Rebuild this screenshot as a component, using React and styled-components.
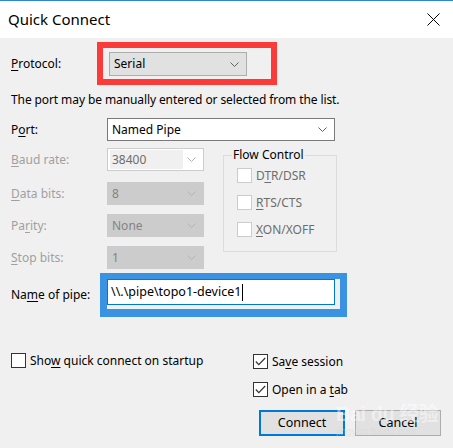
import React from 'react';
import styled, { createGlobalStyle } from 'styled-components';

const GlobalStyle = createGlobalStyle`
  html, body {
    margin: 0;
    padding: 0;
    background: #f0f0f0;
  }
  body {
    font-family: 'Noto Sans', 'Open Sans', sans-serif;
    font-size: 12px;
    line-height: 16px;
    color: #000;
  }
`;

const Window = styled.div`
  position: relative;
  width: 453px;
  height: 448px;
  display: flex;
  flex-direction: column;
  background: #f0f0f0;
  overflow: hidden;
`;

const TitleBar = styled.div`
  height: 37px;
  border-top: 1px solid #2b86d6;
  background: #fff;
  display: flex;
  align-items: center;
  justify-content: space-between;
  padding: 0 13px 0 8px;
  box-sizing: content-box;
`;

const Title = styled.span`
  font-size: 15px;
  color: #000;
  margin-top: -1px;
`;

const Body = styled.div`
  display: flex;
  flex-direction: column;
  padding: 0 11px;
`;

const Row = styled.div`
  display: flex;
  align-items: center;
  margin-top: ${p => p.$top || 0}px;
`;

const Hint = styled.div`
  margin-top: 7px;
  letter-spacing: -0.1px;
`;

const Label = styled.span`
  width: ${p => p.$width || 96}px;
  flex-shrink: 0;
  color: ${p => (p.$disabled ? '#a0a0a0' : '#000')};
`;

const Key = styled.span`
  text-decoration: underline;
  text-underline-offset: 2px;
`;

const Highlight = styled.div`
  border-style: solid;
  border-color: ${p => p.$color};
  border-width: ${p => p.$border};
  padding: ${p => p.$pad};
  display: flex;
  box-sizing: border-box;
`;

const Combo = styled.div`
  width: ${p => p.$width}px;
  height: ${p => p.$height || 23}px;
  box-sizing: border-box;
  display: flex;
  align-items: center;
  justify-content: space-between;
  padding: 0 7px 0 4px;
  border: 1px solid ${p => p.$border};
  background: ${p => p.$bg};
  color: ${p => p.$color || '#000'};
`;

const EditArea = styled.span`
  width: 71px;
  height: 19px;
  margin-left: -2px;
  padding-left: 2px;
  display: flex;
  align-items: center;
  background: #f0f0f0;
  color: #6d6d6d;
`;

const Lower = styled.div`
  display: flex;
  align-items: flex-start;
`;

const Fields = styled.div`
  display: flex;
  flex-direction: column;
`;

const GroupBox = styled.div`
  width: 114px;
  height: 97px;
  box-sizing: border-box;
  margin: 14px 0 0 19px;
  padding: 0 0 0 13px;
  border: 1px solid #dcdcdc;
  display: flex;
  flex-direction: column;
  align-items: flex-start;
  gap: 12px;
`;

const GroupTitle = styled.span`
  margin: -9px 0 -7px -5px;
  padding: 0 1px;
  background: #f0f0f0;
  color: #000;
`;

const Check = styled.label`
  height: 15px;
  display: flex;
  align-items: center;
  gap: 4px;
  color: ${p => (p.$disabled ? '#6d6d6d' : '#000')};
`;

const Box = styled.span`
  width: 15px;
  height: 15px;
  box-sizing: border-box;
  border: 1px solid ${p => (p.$disabled ? '#cccccc' : '#333')};
  background: #fff;
  display: flex;
  align-items: center;
  justify-content: center;
`;

const PipeInput = styled.div`
  width: 228px;
  height: 26px;
  box-sizing: border-box;
  border: 1px solid #0078d7;
  background: #fff;
  display: flex;
  align-items: center;
  padding-left: 3px;
  font-size: 12.5px;
`;

const Caret = styled.span`
  width: 1px;
  height: 17px;
  background: #000;
  margin-left: 1px;
`;

const Bottom = styled.div`
  display: flex;
  align-items: flex-start;
  margin-top: 36px;
`;

const LeftOptions = styled.div`
  width: 242px;
`;

const RightOptions = styled.div`
  display: flex;
  flex-direction: column;
  gap: 13px;
  margin-top: 1px;
`;

const Buttons = styled.div`
  display: flex;
  gap: 10px;
  margin-left: 6px;
`;

const Button = styled.button`
  width: 86px;
  height: 26px;
  box-sizing: border-box;
  font: inherit;
  font-size: 12.5px;
  color: #000;
  background: #e1e1e1;
  border: ${p => (p.$primary ? '2px solid #0078d7' : '1px solid #adadad')};
  padding: 0;
`;

const Watermark = styled.div`
  position: absolute;
  left: 336px;
  top: 404px;
  color: rgba(255, 255, 255, 0.45);
  font-family: 'Liberation Sans', 'Noto Sans CJK SC', sans-serif;
  pointer-events: none;
  line-height: 1;
`;

const MarkTitle = styled.div`
  font-size: 20px;
  font-weight: 700;
  letter-spacing: -0.5px;
`;

const MarkUrl = styled.div`
  font-size: 10px;
  margin-top: 3px;
  color: rgba(215, 215, 215, 0.5);
`;

const Chevron = ({ color = '#606060' }) => (
  <svg width="9" height="5" viewBox="0 0 9 5">
    <polyline points="0.5,0.5 4.5,4.5 8.5,0.5" fill="none" stroke={color} strokeWidth="1" />
  </svg>
);

const Tick = () => (
  <svg width="11" height="9" viewBox="0 0 11 9">
    <polyline points="0.8,4.5 3.8,7.6 10.2,1" fill="none" stroke="#333" strokeWidth="1.2" />
  </svg>
);

const Close = () => (
  <svg width="13" height="13" viewBox="0 0 13 13">
    <path d="M0.5 0.5 L12.5 12.5 M12.5 0.5 L0.5 12.5" stroke="#000" strokeWidth="1" />
  </svg>
);

const DisabledCombo = ({ value }) => (
  <Combo $width={97} $border="#cccccc" $bg="#cccccc" $color="#838383">
    <span>{value}</span>
    <Chevron color="#b4b4b4" />
  </Combo>
);

const CheckItem = ({ checked, disabled, children }) => (
  <Check $disabled={disabled}>
    <Box $disabled={disabled}>{checked && <Tick />}</Box>
    <span>{children}</span>
  </Check>
);

export default function App() {
  return (
    <>
      <GlobalStyle />
      <Window>
        <TitleBar>
          <Title>Quick Connect</Title>
          <Close />
        </TitleBar>
        <Body>
          <Row $top={4}>
            <Label $width={86}>
              <Key>P</Key>rotocol:
            </Label>
            <Highlight $color="#fb3a3a" $border="6px" $pad="4px 24px 3px 6px">
              <Combo $width={138} $height={24} $border="#adadad" $bg="#e1e1e1">
                <span>Serial</span>
                <Chevron />
              </Combo>
            </Highlight>
          </Row>
          <Hint>The port may be manually entered or selected from the list.</Hint>
          <Row $top={10}>
            <Label>
              P<Key>o</Key>rt:
            </Label>
            <Combo $width={228} $border="#7a7a7a" $bg="#fff">
              <span>Named Pipe</span>
              <Chevron />
            </Combo>
          </Row>
          <Lower>
            <Fields>
              <Row $top={7}>
                <Label $disabled>
                  <Key>B</Key>aud rate:
                </Label>
                <Combo $width={97} $border="#cccccc" $bg="#fff">
                  <EditArea>38400</EditArea>
                  <Chevron color="#b4b4b4" />
                </Combo>
              </Row>
              <Row $top={11}>
                <Label $disabled>
                  <Key>D</Key>ata bits:
                </Label>
                <DisabledCombo value="8" />
              </Row>
              <Row $top={9}>
                <Label $disabled>
                  Pa<Key>r</Key>ity:
                </Label>
                <DisabledCombo value="None" />
              </Row>
              <Row $top={9}>
                <Label $disabled>
                  <Key>S</Key>top bits:
                </Label>
                <DisabledCombo value="1" />
              </Row>
            </Fields>
            <GroupBox>
              <GroupTitle>Flow Control</GroupTitle>
              <CheckItem disabled>
                D<Key>T</Key>R/DSR
              </CheckItem>
              <CheckItem disabled>
                <Key>R</Key>TS/CTS
              </CheckItem>
              <CheckItem disabled>
                <Key>X</Key>ON/XOFF
              </CheckItem>
            </GroupBox>
          </Lower>
          <Row $top={4}>
            <Label $width={89}>
              Na<Key>m</Key>e of pipe:
            </Label>
            <Highlight $color="#3a92e2" $border="6px 7px 8px 7px" $pad="0 5px 4px 0">
              <PipeInput>
                {'\\\\.\\pipe\\topo1-device1'}
                <Caret />
              </PipeInput>
            </Highlight>
          </Row>
          <Bottom>
            <LeftOptions>
              <CheckItem>
                Sho<Key>w</Key> quick connect on startup
              </CheckItem>
            </LeftOptions>
            <RightOptions>
              <CheckItem checked>
                Sa<Key>v</Key>e session
              </CheckItem>
              <CheckItem checked>
                Open in a <Key>t</Key>ab
              </CheckItem>
              <Buttons>
                <Button $primary>Connect</Button>
                <Button>Cancel</Button>
              </Buttons>
            </RightOptions>
          </Bottom>
        </Body>
        <Watermark>
          <MarkTitle>Bai du 经验</MarkTitle>
          <MarkUrl>jingyan.baidu.com</MarkUrl>
        </Watermark>
      </Window>
    </>
  );
}
